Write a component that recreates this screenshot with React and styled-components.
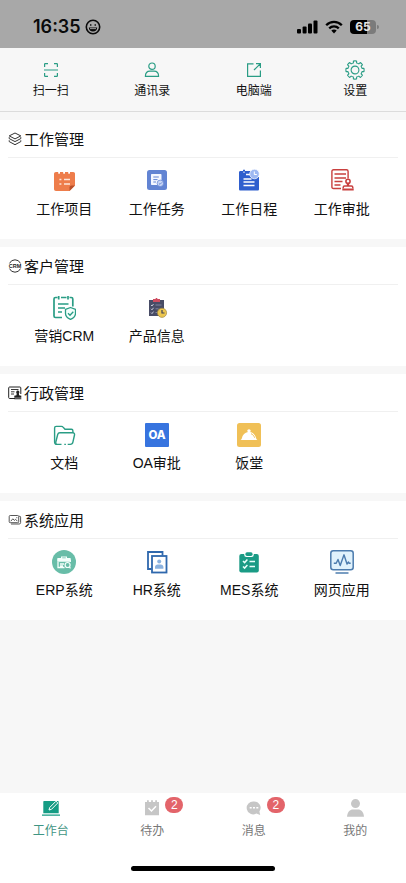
import React from 'react'
import styled, { createGlobalStyle } from 'styled-components'

const GREEN = '#2a9d85'

/* ---------- status bar icons ---------- */
const SmileIcon = () => (
  <svg width="16" height="16" viewBox="0 0 16 16" fill="none" stroke="#0a0a0a">
    <circle cx="8" cy="8" r="6.7" strokeWidth="1.6" />
    <ellipse cx="5.8" cy="6" rx="0.7" ry="1.1" fill="#0a0a0a" stroke="none" />
    <ellipse cx="10.2" cy="6" rx="0.7" ry="1.1" fill="#0a0a0a" stroke="none" />
    <path d="M3.8 8.4h8.4c0 2.4-1.8 4-4.2 4s-4.2-1.6-4.2-4z" fill="#0a0a0a" stroke="none" />
    <path d="M5 9.6h6" stroke="#a8a8a8" strokeWidth="0.9" />
  </svg>
)
const SignalIcon = () => (
  <svg width="21" height="14" viewBox="0 0 21 14" fill="#000">
    <rect x="0" y="9" width="4" height="4.5" rx="1" />
    <rect x="5.6" y="6.5" width="4" height="7" rx="1" />
    <rect x="11" y="3.5" width="4" height="10" rx="1" />
    <rect x="16.5" y="0.5" width="4" height="13" rx="1" />
  </svg>
)
const WifiIcon = () => (
  <svg width="18" height="14" viewBox="0 0 18 14" fill="none" stroke="#000" strokeWidth="2.3">
    <path d="M1.2 5.2c4.4-4.4 11.200-4.400 15.600 0" />
    <path d="M4.2 8.300c2.700-2.600 6.900-2.600 9.600 0" />
    <path d="M6.3 10.600c1.500-1.500 3.900-1.500 5.400 0L9 13.400z" fill="#000" stroke="none" />
  </svg>
)

/* ---------- toolbar icons ---------- */
const ScanIcon = () => (
  <svg width="20" height="20" viewBox="0 0 20 20" fill="none" stroke={GREEN} strokeWidth="1.2">
    <path d="M3.6 7V4.300c0-.500.200-.700.700-.700H7M13 3.600h2.700c.500 0 .700.200.700.700V7M3.600 13v2.700c0 .500.200.700.700.700H7M13 16.400h2.700c.500 0 .700-.200.700-.700V13M3 10h14" />
  </svg>
)
const ContactIcon = () => (
  <svg width="20" height="20" viewBox="0 0 20 20" fill="none" stroke={GREEN} strokeWidth="1.2">
    <circle cx="10" cy="6.2" r="3.2" />
    <path d="M3.4 16.400c0-3.400 1.800-5.200 4.600-5.200h4c2.800 0 4.600 1.800 4.600 5.200z" strokeLinejoin="round" />
  </svg>
)
const DesktopIcon = () => (
  <svg width="20" height="20" viewBox="0 0 20 20" fill="none" stroke={GREEN} strokeWidth="1.2">
    <path d="M9.5 3.800H3.600v12.600h12.800v-5.800M12 3.600h4.400V8M16.200 3.800L10 10" />
  </svg>
)

// eight flat teeth round the centre (10, 10)
const polar = (r, deg) => {
  const a = (deg * Math.PI) / 180
  return `${(10 + r * Math.cos(a)).toFixed(2)} ${(10 + r * Math.sin(a)).toFixed(2)}`
}
const gearPath = [0, 45, 90, 135, 180, 225, 270, 315]
  .map((a, i) => `${i ? 'A7.2 7.2 0 0 1' : 'M'} ${polar(7.2, a - 13)} L${polar(9.1, a - 10)} A9.1 9.1 0 0 1 ${polar(9.1, a + 10)} L${polar(7.2, a + 13)}`)
  .join(' ') + ` A7.2 7.2 0 0 1 ${polar(7.2, -13)}z`

const GearIcon = () => (
  <svg width="20" height="20" viewBox="0 0 20 20" fill="none" stroke={GREEN} strokeWidth="1.1" strokeLinejoin="round">
    <path d={gearPath} />
    <circle cx="10" cy="10" r="3.9" />
  </svg>
)

/* ---------- section title icons ---------- */
const LayersIcon = () => (
  <svg width="14" height="14" viewBox="0 0 14 14" fill="none" stroke="#333" strokeWidth="1" strokeLinejoin="round">
    <path d="M7 1l5.800 2.900L7 6.900 1.200 3.900z" />
    <path d="M1.200 5.200v1.400L7 9.600l5.800-3V5.200M1.200 8.300v1.300L7 12.700l5.800-3.100V8.300" />
  </svg>
)
const CrmIcon = () => (
  <svg width="14" height="14" viewBox="0 0 14 14" fill="none" stroke="#333">
    <path d="M1.500 4.400a6 6 0 0 1 11 0M1.500 9.600a6 6 0 0 0 11 0" strokeWidth="1" />
    <text x="7" y="9" textAnchor="middle" fontFamily="Liberation Sans, sans-serif" fontSize="5.5" fontWeight="700" fill="#222" stroke="none">CRM</text>
  </svg>
)
const AdminIcon = () => (
  <svg width="14" height="14" viewBox="0 0 14 14" fill="none" stroke="#222">
    <path d="M7 12.500H1.600c-.500 0-.900-.300-.900-.900V1.900c0-.500.300-.900.900-.900h10.300c.500 0 .900.300.900.900V8" strokeWidth="1" />
    <path d="M3 3.500h7.500M3 5.800h3.500M3 8h3" strokeWidth="0.9" />
    <path d="M9.700 4.500a1.700 1.700 0 0 1 1.200 2.900l.200 1.800 2.200.600v2H6.300v-2l2.200-.600.200-1.800a1.700 1.700 0 0 1 1-2.900zM6.300 12.300h7v1h-7z" fill="#222" stroke="none" />
  </svg>
)
const SystemIcon = () => (
  <svg width="14" height="14" viewBox="0 0 14 14" fill="none" stroke="#444" strokeWidth="0.9">
    <rect x="1.2" y="2.5" width="9.5" height="7.2" rx="1" />
    <path d="M11 3.300h.800c.500 0 .800.300.800.800v5.500c0 .900-.500 1.400-1.400 1.400H3M2.800 8.200l2-2.400 1.500 1.600 1.300-1.100 1.800 1.900M8.300 4.700h1" />
  </svg>
)

/* ---------- app icons, 24 x 24 ---------- */
const AppSvg = ({ children }) => (
  <svg width="24" height="24" viewBox="0 0 24 24" fill="none">{children}</svg>
)
const ProjectIcon = () => (
  <AppSvg>
    <path d="M4 3h2.200v1.200c0 .700 1.800.700 1.800 0V3h3.200v1.200c0 .700 1.800.700 1.800 0V3h3.200v1.200c0 .700 1.800.700 1.800 0V3h3.200c1.100 0 1.800.700 1.800 1.800v11.700L17.500 22H4c-1.200 0-2-.800-2-2V5c0-1.200.800-2 2-2z" fill="#ee7d4b" />
    <path d="M17.500 22v-3.500c0-1.200.800-2 2-2H23z" fill="#b9502c" />
    <path d="M7.400 10.500h2M7.400 15h2M12 10.500h6M12 15h6" stroke="#fde6da" strokeWidth="1.7" />
  </AppSvg>
)
const TaskIcon = () => (
  <AppSvg>
    <rect x="2" y="1" width="20" height="20" rx="2.5" fill="#6284d3" />
    <path d="M7 5h8.500c.600 0 1 .400 1 1v7.500l-4 2.500H7c-.600 0-1-.400-1-1V6c0-.600.400-1 1-1z" fill="#f4f7ff" />
    <path d="M8.300 8h5.500M8.300 10.600h4.200M8.300 13h2.700" stroke="#6284d3" strokeWidth="1" />
    <circle cx="15.3" cy="14.3" r="3.2" fill="#c9d6f5" stroke="#6284d3" strokeWidth="0.7" />
    <path d="M13.900 14.300l1.100 1.100 1.900-2" stroke="#6284d3" strokeWidth="0.9" />
  </AppSvg>
)
const ScheduleIcon = () => (
  <AppSvg>
    <path d="M3.500 2H6v1.500h2V2h8v6h6v12c0 1-.500 1.500-1.500 1.500h-17C2.500 21.500 2 21 2 20V3.500C2 2.500 2.500 2 3.500 2z" fill="#2f5fce" />
    <path d="M6 0.800h2v2H6z" fill="#2f5fce" />
    <path d="M9 5.500h4M6.500 10h8M6.500 13h11M6.500 16.500h11" stroke="#fff" strokeWidth="1.3" />
    <circle cx="17.500" cy="5" r="4.8" fill="#9db8f2" stroke="#fff" strokeWidth="0.7" />
    <path d="M17.300 2.500v3h2.500" stroke="#fff" strokeWidth="1" />
  </AppSvg>
)
const ApproveIcon = () => (
  <AppSvg>
    <path d="M11 19.500H3.500c-1 0-1.600-.600-1.600-1.600V2.400c0-1 .600-1.600 1.600-1.600h13c1 0 1.600.600 1.600 1.600v7" stroke="#c9403f" strokeWidth="1.4" />
    <path d="M4.500 5h11.500M4.500 9h11.500M4.500 12.500h8M4.500 16h6" stroke="#c9403f" strokeWidth="1.3" />
    <circle cx="18" cy="12.300" r="2.1" stroke="#c9403f" strokeWidth="1.6" />
    <path d="M18 14.500v2.500" stroke="#c9403f" strokeWidth="2.4" />
    <path d="M13.200 19.500v-1c0-.900.500-1.400 1.400-1.400h6.800c.900 0 1.400.500 1.400 1.400v1" stroke="#c9403f" strokeWidth="1.5" />
    <path d="M12.300 20.500h11.400" stroke="#c9403f" strokeWidth="2" />
  </AppSvg>
)
const MarketingIcon = () => (
  <AppSvg>
    <path d="M5.500 1.500H3.500c-1 0-1.500.500-1.500 1.500v17c0 1 .500 1.500 1.500 1.500H10M17.500 1.500h1.800c1 0 1.500.500 1.500 1.500v7.500M9 1.500h5.500M6.700 0v3.500M16 0v3.500" stroke={GREEN} strokeWidth="1.7" />
    <path d="M6 8h10.500M6 12h7M6 16h4" stroke={GREEN} strokeWidth="1.6" />
    <path d="M18.500 11.500l5 1.900v4c0 2.700-2 4.600-5 6-3-1.400-5-3.300-5-6v-4z" fill="#f2fffc" stroke={GREEN} strokeWidth="1.3" strokeLinejoin="round" />
    <path d="M16 17.200l2 2 3.300-3.500" stroke={GREEN} strokeWidth="1.3" />
  </AppSvg>
)
const ProductIcon = () => (
  <AppSvg>
    <path d="M4 4h15v16H4z" fill="#484c66" />
    <path d="M8 3h2.500c0-1.400 2-1.400 2 0H15v3H8z" fill="#ce4c60" />
    <path d="M6 9l1 1 1.500-2M6 12.800l1 1 1.500-2M6 16.600l1 1 1.500-2" stroke="#e8e8f2" strokeWidth="0.8" />
    <path d="M10.500 9h6M10.500 12.800h3M10.500 16.500h2" stroke="#80849e" strokeWidth="1" />
    <circle cx="17" cy="16.800" r="4.6" fill="#ecc64f" stroke="#a28a43" strokeWidth="0.7" />
    <path d="M17 14v3h2.500" stroke="#40435a" strokeWidth="1.2" />
  </AppSvg>
)
const FolderIcon = () => (
  <AppSvg>
    <path d="M9.500 21.400H5c-1.600 0-2.400-.900-2.400-2.400V5c0-1 .600-1.600 1.600-1.600h5.300c.700 0 1.200.200 1.600.700l1.900 2.200h6.400c.900 0 1.500.600 1.500 1.500v2" stroke={GREEN} strokeWidth="1.4" />
    <path d="M4.300 21c-.600-.500-.700-1.200-.500-2l1.900-7.500c.300-1.100 1-1.700 2.200-1.700h12.800c1.400 0 2.100.800 1.800 2.200l-1.600 7.200c-.300 1.500-1.200 2.200-2.600 2.200h-2.600" stroke={GREEN} strokeWidth="1.4" />
    <path d="M12.300 21.400h1.600" stroke={GREEN} strokeWidth="1.4" />
  </AppSvg>
)
const OaIcon = () => (
  <AppSvg>
    <rect width="24" height="24" rx="1" fill="#3774df" />
    <text x="12" y="16" textAnchor="middle" fontFamily="Inter, sans-serif" fontSize="11.5" fontWeight="800" fill="#fff">OA</text>
  </AppSvg>
)
const CanteenIcon = () => (
  <AppSvg>
    <rect width="24" height="24" rx="2.5" fill="#f0c057" />
    <path d="M3.500 17c.500-.300 1-.600 1.200-1.200C5.500 12 8 9.500 11 9.100c-1.400-1-.600-2.800 1-2.800s2.400 1.800 1 2.800c3 .400 5.500 2.900 6.300 6.700.200.600.700.900 1.200 1.200z" fill="#fff" />
    <path d="M14 10.700c1.800.700 2.900 2 3.600 4" stroke="#f0c057" strokeWidth="1" />
  </AppSvg>
)
const ErpIcon = () => (
  <AppSvg>
    <circle cx="12" cy="12" r="12" fill="#68bda8" />
    <path d="M6 8h3V6.500h6V8h3c.500 0 .800.300.800.800v3H5.200v-3c0-.500.300-.800.800-.800zM10.200 7.600v.700h3.600v-.700z" fill="#f4fffc" />
    <path d="M6 12v5.500h6.500M18.300 10v2M8 14h4M8 16h3" stroke="#f4fffc" strokeWidth="1.3" />
    <circle cx="15.600" cy="15" r="2.5" fill="#68bda8" stroke="#f4fffc" strokeWidth="1.2" />
    <path d="M17.400 17l1.100 1.300" stroke="#f4fffc" strokeWidth="1.2" />
  </AppSvg>
)
const HrIcon = () => (
  <AppSvg>
    <path d="M6.500 19H3V2h14.500v3.500" stroke="#2f68ad" strokeWidth="1.8" />
    <rect x="7" y="6" width="14.500" height="16.500" fill="#fff" stroke="#2f68ad" strokeWidth="1.8" />
    <circle cx="14.200" cy="11.400" r="2" fill="#8bb2df" />
    <path d="M10 18.800v-1.500c0-2 1.200-2.800 2.700-2.800h3c1.500 0 2.700.800 2.700 2.800v1.500z" fill="#8bb2df" />
  </AppSvg>
)
const MesIcon = () => (
  <AppSvg>
    <rect x="2.300" y="4" width="19.500" height="18.500" rx="2" fill="#1a9b85" />
    <rect x="7.200" y="2" width="9.600" height="5" rx="2.300" fill="#fff" />
    <rect x="8.400" y="2.300" width="7.200" height="3.600" rx="1.600" fill="#1a9b85" />
    <path d="M6 11l1.600 1.600L10.400 9.600M6 16.500l1.600 1.600 2.800-3M12.500 11.500H18M12.500 16.500H18" stroke="#e9fffb" strokeWidth="1.5" />
  </AppSvg>
)
const WebIcon = () => (
  <AppSvg>
    <rect x="0.800" y="0.800" width="22.400" height="19" rx="2.500" fill="#e0f2fc" stroke="#4c7cae" strokeWidth="1.500" />
    <path d="M3.800 13.300h2.400L8 9.500l2.200 6L14 4.800l3 9.200 1.500-2 .800 1.300h1.400" stroke="#4c7cae" strokeWidth="1.400" strokeLinejoin="round" />
    <path d="M5.500 23h13" stroke="#4c7cae" strokeWidth="1.500" />
  </AppSvg>
)

/* ---------- tab icons ---------- */
const WorkbenchIcon = () => (
  <svg width="20" height="20" viewBox="0 0 20 20">
    <path d="M3.300 3h13.400c.600 0 1 .400 1 1v11.200H2.300V4c0-.600.400-1 1-1zM1 16.500h18v1.200H1z" fill="#159c84" />
    <path d="M8 12l.7-2.500L15 3.200l1.800 1.700-6.300 6.400z" fill="#159c84" stroke="#fff" strokeWidth="1" />
  </svg>
)
const TodoIcon = () => (
  <svg width="20" height="20" viewBox="0 0 20 20">
    <path d="M3 4h2V2.300h1.800V4h2.300V2.300h1.800V4h2.300V2.300H15V4h2v13.200H3z" fill="#c6c6c6" />
    <path d="M6.500 10l3 3 4.500-4.700" fill="none" stroke="#fff" strokeWidth="1.5" />
  </svg>
)
const MessageIcon = () => (
  <svg width="20" height="20" viewBox="0 0 20 20">
    <path d="M10 3.500a6.500 6.300 0 0 1 5.400 9.900l.800 3.600-3.800-1.400A6.500 6.500 0 1 1 10 3.500z" fill="#c6c6c6" />
    <path d="M5.700 9.700h2M9 9.700h2M12.300 9.700h2" stroke="#fff" strokeWidth="1.6" />
  </svg>
)
const MineIcon = () => (
  <svg width="20" height="20" viewBox="0 0 20 20" fill="#c6c6c6">
    <circle cx="10.500" cy="5.600" r="4.500" />
    <path d="M2 18.700c.400-5 3-7.300 6-7.300h5c3 0 5.600 2.300 6 7.300z" />
  </svg>
)

const actions = [
  { label: '扫一扫', icon: <ScanIcon /> },
  { label: '通讯录', icon: <ContactIcon /> },
  { label: '电脑端', icon: <DesktopIcon /> },
  { label: '设置', icon: <GearIcon /> },
]

const sections = [
  {
    title: '工作管理',
    icon: <LayersIcon />,
    apps: [
      { label: '工作项目', icon: <ProjectIcon /> },
      { label: '工作任务', icon: <TaskIcon /> },
      { label: '工作日程', icon: <ScheduleIcon /> },
      { label: '工作审批', icon: <ApproveIcon /> },
    ],
  },
  {
    title: '客户管理',
    icon: <CrmIcon />,
    apps: [
      { label: '营销CRM', icon: <MarketingIcon /> },
      { label: '产品信息', icon: <ProductIcon /> },
    ],
  },
  {
    title: '行政管理',
    icon: <AdminIcon />,
    apps: [
      { label: '文档', icon: <FolderIcon /> },
      { label: 'OA审批', icon: <OaIcon /> },
      { label: '饭堂', icon: <CanteenIcon /> },
    ],
  },
  {
    title: '系统应用',
    icon: <SystemIcon />,
    apps: [
      { label: 'ERP系统', icon: <ErpIcon /> },
      { label: 'HR系统', icon: <HrIcon /> },
      { label: 'MES系统', icon: <MesIcon /> },
      { label: '网页应用', icon: <WebIcon /> },
    ],
  },
]

const tabs = [
  { label: '工作台', icon: <WorkbenchIcon />, active: true },
  { label: '待办', icon: <TodoIcon />, count: 2 },
  { label: '消息', icon: <MessageIcon />, count: 2 },
  { label: '我的', icon: <MineIcon /> },
]

const App = () => {
  return (
    <Page>
      <GlobalStyle />
      <StatusBar>
        <Clock>16:35</Clock>
        <SmileIcon />
        <StatusRight>
          <SignalIcon />
          <WifiIcon />
          <Battery>65</Battery>
        </StatusRight>
      </StatusBar>
      <Toolbar>
        {actions.map((action) => (
          <ToolButton key={action.label} type="button">
            {action.icon}
            {action.label}
          </ToolButton>
        ))}
      </Toolbar>
      <Main>
        {sections.map((section) => (
          <Section key={section.title}>
            <SectionTitle>
              {section.icon}
              {section.title}
            </SectionTitle>
            <AppGrid>
              {section.apps.map((app) => (
                <AppLink key={app.label} href="#">
                  {app.icon}
                  {app.label}
                </AppLink>
              ))}
            </AppGrid>
          </Section>
        ))}
      </Main>
      <Footer>
        <TabBar>
          {tabs.map((tab) => (
            <Tab key={tab.label} href="#" $active={tab.active}>
              <TabIcon>
                {tab.icon}
                {tab.count && <Badge>{tab.count}</Badge>}
              </TabIcon>
              {tab.label}
            </Tab>
          ))}
        </TabBar>
        <HomeIndicator />
      </Footer>
    </Page>
  )
}

export default App

const GlobalStyle = createGlobalStyle`
* {
    box-sizing: border-box;
}
body {
    margin: 0;
    background: #f7f7f7;
    color: #111;
    font-family: "Liberation Sans", "Noto Sans CJK SC", sans-serif;
}
svg {
    display: block;
    flex: none;
}
`;
const Page = styled.div`
display: flex;
flex-direction: column;
min-height: 100vh;
`;
const StatusBar = styled.header`
display: flex;
align-items: center;
gap: 4px;
height: 48px;
padding: 5px 30px 0 33px;
background: #a8a8a8;
`;
const Clock = styled.span`
font-family: Inter, sans-serif;
font-size: 18px;
font-weight: 600;
line-height: 22px;
color: #0a0a0a;
`;
const StatusRight = styled.div`
display: flex;
align-items: center;
gap: 7px;
margin-left: auto;
`;
const Battery = styled.span`
position: relative;
width: 26px;
height: 14px;
border-radius: 4px;
background: linear-gradient(90deg, #000 65%, #7b7b7b 65%);
color: #e4e4e4;
font-family: Inter, sans-serif;
font-size: 12px;
font-weight: 700;
line-height: 14px;
text-align: center;

&::after {
    content: "";
    position: absolute;
    right: -3px;
    top: 5px;
    width: 2px;
    height: 4px;
    border-radius: 0 2px 2px 0;
    background: #7b7b7b;
}
`;
const Toolbar = styled.nav`
display: grid;
grid-template-columns: repeat(4, 1fr);
padding: 12px 0 11px;
border-bottom: 1px solid #dcdcdc;
`;
const ToolButton = styled.button`
display: flex;
flex-direction: column;
align-items: center;
gap: 2px;
padding: 0;
border: none;
background: none;
color: inherit;
font-family: inherit;
font-size: 12px;
line-height: 18px;
cursor: pointer;
`;
const Main = styled.main`
display: flex;
flex: 1;
flex-direction: column;
gap: 8px;
padding: 8px 0;
`;
const Section = styled.section`
padding: 0 8px;
background: #fff;
`;
const SectionTitle = styled.h2`
display: flex;
align-items: center;
gap: 2px;
height: 38px;
margin: 0;
border-bottom: 1px solid #f0f0f0;
font-size: 15px;
font-weight: 400;
`;
const AppGrid = styled.div`
display: grid;
grid-template-columns: repeat(4, 1fr);
padding: 11px 10px 20px;
`;
const AppLink = styled.a`
display: flex;
flex-direction: column;
align-items: center;
gap: 6px;
color: inherit;
font-size: 14px;
line-height: 20px;
text-decoration: none;
white-space: nowrap;
`;
const Footer = styled.footer`
padding-bottom: 12px;
background: #fff;
`;
const TabBar = styled.nav`
display: grid;
grid-template-columns: repeat(4, 1fr);
padding: 5px 0 26px;
`;
const Tab = styled.a`
display: flex;
flex-direction: column;
align-items: center;
gap: 4px;
color: ${(props) => (props.$active ? '#3f9583' : '#777')};
font-size: 12px;
line-height: 18px;
text-decoration: none;
`;
const TabIcon = styled.span`
position: relative;
`;
const Badge = styled.span`
position: absolute;
top: -1px;
left: 23px;
width: 18px;
height: 16px;
border-radius: 8px;
background: #e3646a;
color: #fff;
font-size: 12px;
line-height: 16px;
text-align: center;
`;
const HomeIndicator = styled.div`
width: 144px;
height: 5px;
margin: 0 auto;
border-radius: 3px;
background: #000;
`;
